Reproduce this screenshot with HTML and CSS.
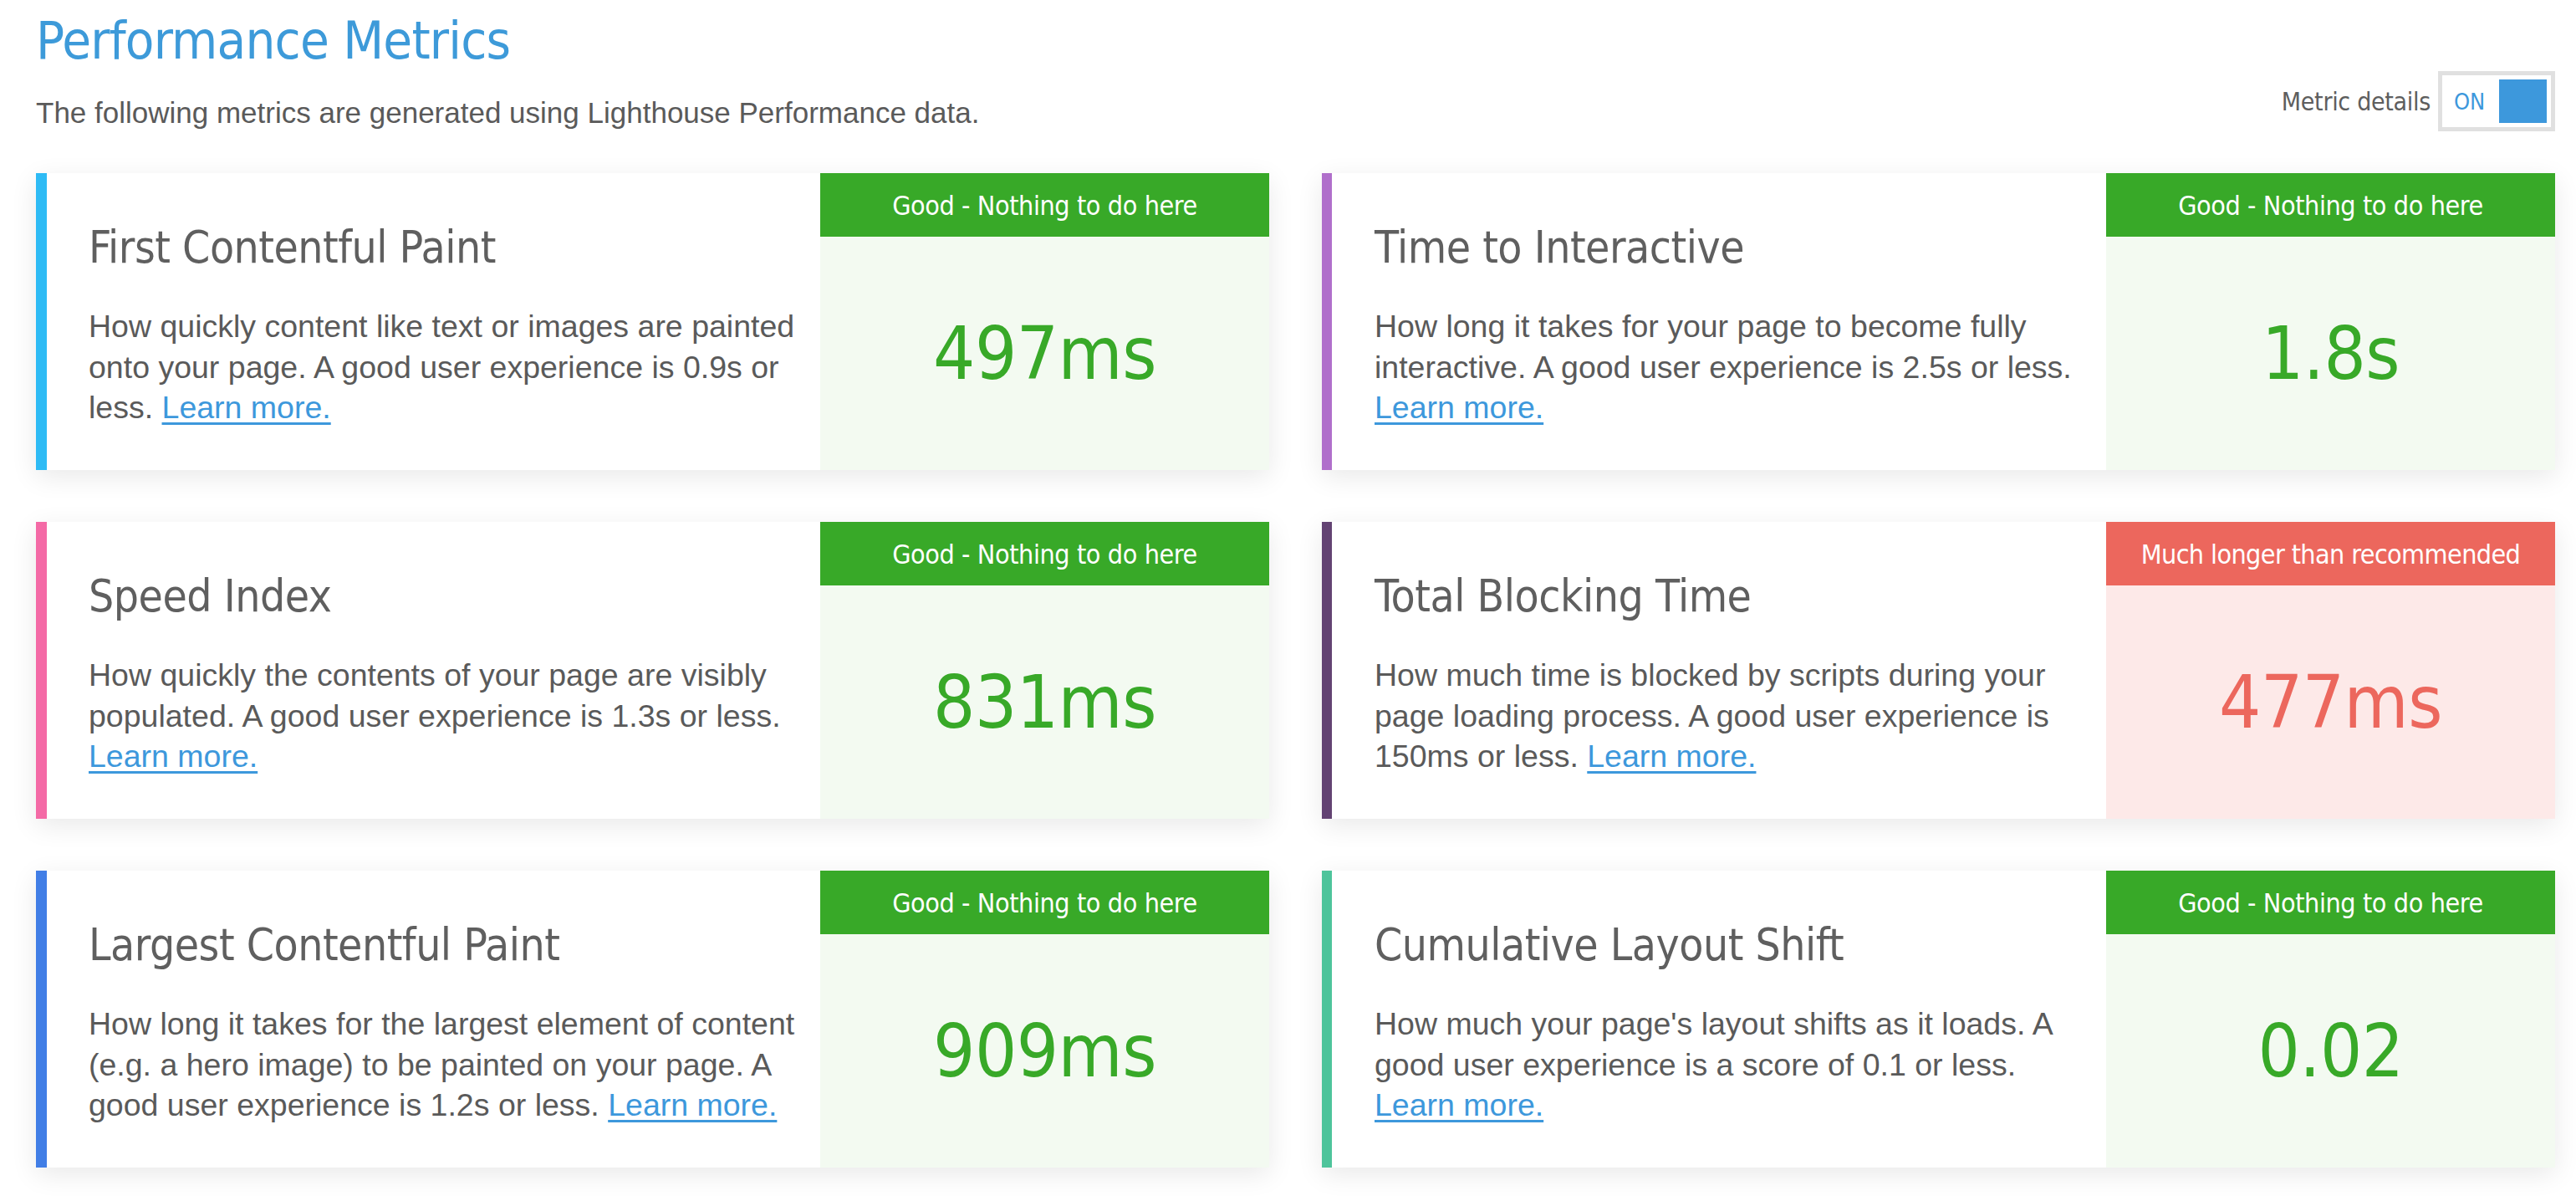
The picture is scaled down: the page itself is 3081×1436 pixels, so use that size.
FILE: index.html
```html
<!DOCTYPE html>
<html lang="en">
<head>
<meta charset="utf-8">
<title>Performance Metrics</title>
<link rel="stylesheet" href="styles.css">
</head>
<body>
<main class="page">
  <header class="page-head">
    <div class="intro">
      <h1 class="page-title">Performance Metrics</h1>
      <p class="lead">The following metrics are generated using Lighthouse Performance data.</p>
    </div>
    <div class="details-toggle">
      <span class="details-label">Metric details</span>
      <span class="switch"><span class="switch-text">ON</span><span class="switch-knob"></span></span>
    </div>
  </header>

  <section class="metrics">
    <article class="metric metric-fcp">
      <div class="metric-body">
        <h2 class="metric-name">First Contentful Paint</h2>
        <p class="metric-desc">How quickly content like text or images are painted onto your page. A good user experience is 0.9s or less. <a class="more" href="#">Learn more.</a></p>
      </div>
      <div class="metric-score good">
        <div class="score-label">Good - Nothing to do here</div>
        <div class="score-value">497ms</div>
      </div>
    </article>

    <article class="metric metric-tti">
      <div class="metric-body">
        <h2 class="metric-name">Time to Interactive</h2>
        <p class="metric-desc">How long it takes for your page to become fully interactive. A good user experience is 2.5s or less. <a class="more" href="#">Learn more.</a></p>
      </div>
      <div class="metric-score good">
        <div class="score-label">Good - Nothing to do here</div>
        <div class="score-value">1.8s</div>
      </div>
    </article>

    <article class="metric metric-si">
      <div class="metric-body">
        <h2 class="metric-name">Speed Index</h2>
        <p class="metric-desc">How quickly the contents of your page are visibly populated. A good user experience is 1.3s or less. <a class="more" href="#">Learn more.</a></p>
      </div>
      <div class="metric-score good">
        <div class="score-label">Good - Nothing to do here</div>
        <div class="score-value">831ms</div>
      </div>
    </article>

    <article class="metric metric-tbt">
      <div class="metric-body">
        <h2 class="metric-name">Total Blocking Time</h2>
        <p class="metric-desc">How much time is blocked by scripts during your page loading process. A good user experience is 150ms or less. <a class="more" href="#">Learn more.</a></p>
      </div>
      <div class="metric-score bad">
        <div class="score-label">Much longer than recommended</div>
        <div class="score-value">477ms</div>
      </div>
    </article>

    <article class="metric metric-lcp">
      <div class="metric-body">
        <h2 class="metric-name">Largest Contentful Paint</h2>
        <p class="metric-desc">How long it takes for the largest element of content (e.g. a hero image) to be painted on your page. A good user experience is 1.2s or less. <a class="more" href="#">Learn more.</a></p>
      </div>
      <div class="metric-score good">
        <div class="score-label">Good - Nothing to do here</div>
        <div class="score-value">909ms</div>
      </div>
    </article>

    <article class="metric metric-cls">
      <div class="metric-body">
        <h2 class="metric-name">Cumulative Layout Shift</h2>
        <p class="metric-desc">How much your page's layout shifts as it loads. A good user experience is a score of 0.1 or less. <a class="more" href="#">Learn more.</a></p>
      </div>
      <div class="metric-score good">
        <div class="score-label">Good - Nothing to do here</div>
        <div class="score-value">0.02</div>
      </div>
    </article>
  </section>
</main>
</body>
</html>
```
FILE: styles.css
```css
html, body {
  margin: 0;
  padding: 0;
  background: #ffffff;
}

.page {
  padding: 0 25px 40px 43px;
  font-family: "Liberation Sans", Arial, sans-serif;
  color: #5a5a5a;
}

.page-head {
  display: flex;
  justify-content: space-between;
  align-items: flex-end;
}

.page-title {
  margin: 11px 0 0 0;
  font-family: "DejaVu Sans Condensed", "DejaVu Sans", sans-serif;
  font-weight: normal;
  font-size: 63px;
  line-height: 76px;
  letter-spacing: -0.8px;
  color: #3d9ad9;
}

.lead {
  margin: 24px 0 0 0;
  font-size: 35px;
  line-height: 48px;
  color: #5a5a5a;
}

.details-toggle {
  display: flex;
  align-items: center;
  gap: 9px;
  margin-bottom: 2px;
}

.details-label {
  font-family: "DejaVu Sans Condensed", "DejaVu Sans", sans-serif;
  font-size: 30px;
  letter-spacing: -0.3px;
  color: #5e5e5e;
}

.switch {
  display: flex;
  align-items: center;
  justify-content: space-between;
  width: 120px;
  height: 52px;
  padding: 5px;
  border: 5px solid #e0e0e0;
  background: #ffffff;
}

.switch-text {
  padding-left: 9px;
  font-family: "DejaVu Sans Condensed", "DejaVu Sans", sans-serif;
  font-size: 27px;
  color: #3d98dc;
}

.switch-knob {
  width: 57px;
  height: 52px;
  background: #3d98dc;
}

.metrics {
  display: grid;
  grid-template-columns: 1fr 1fr;
  column-gap: 63px;
  row-gap: 62.5px;
  margin-top: 48px;
}

.metric {
  display: grid;
  grid-template-columns: 1fr 537px;
  border-left: 13px solid #2ebbf5;
  background: #ffffff;
  box-shadow: 0 8px 30px rgba(0, 0, 0, 0.09);
}

.metric-fcp { border-left-color: #2ebbf5; }
.metric-tti { border-left-color: #b06fcb; border-left-width: 12px; }
.metric-si  { border-left-color: #f46aa6; }
.metric-tbt { border-left-color: #634373; border-left-width: 12px; }
.metric-lcp { border-left-color: #417ee6; }
.metric-cls { border-left-color: #4ec49b; border-left-width: 12px; }

.metric-body {
  padding: 57px 17px 50px 50px;
}

.metric-tti .metric-body,
.metric-tbt .metric-body,
.metric-cls .metric-body {
  padding-left: 51px;
}

.metric-name {
  margin: 0;
  font-family: "DejaVu Sans Condensed", "DejaVu Sans", sans-serif;
  font-weight: normal;
  font-size: 53px;
  line-height: 64px;
  letter-spacing: -0.5px;
  color: #5f5f5f;
}

.metric-desc {
  margin: 38px 0 0 0;
  max-width: 862px;
  font-size: 37.5px;
  line-height: 48.5px;
  color: #5a5a5a;
}

.more {
  color: #3d98dc;
  text-decoration: underline;
  text-decoration-thickness: 3px;
  text-underline-offset: 5px;
}

.metric-score {
  display: flex;
  flex-direction: column;
}

.score-label {
  height: 76px;
  display: flex;
  align-items: center;
  justify-content: center;
  padding-top: 2px;
  box-sizing: border-box;
  font-family: "DejaVu Sans Condensed", "DejaVu Sans", sans-serif;
  font-size: 32px;
  letter-spacing: -0.4px;
  color: #ffffff;
}

.bad .score-label {
  letter-spacing: -0.6px;
}

.score-value {
  flex: 1;
  display: flex;
  align-items: center;
  justify-content: center;
  font-family: "DejaVu Sans Condensed", "DejaVu Sans", sans-serif;
  font-size: 88px;
  letter-spacing: -0.5px;
}

.good { background: #f3faf1; }
.good .score-label { background: #38a928; }
.good .score-value { color: #38a928; }

.bad { background: #fde9e8; }
.bad .score-label { background: #ec675d; }
.bad .score-value { color: #ec675d; }
```
